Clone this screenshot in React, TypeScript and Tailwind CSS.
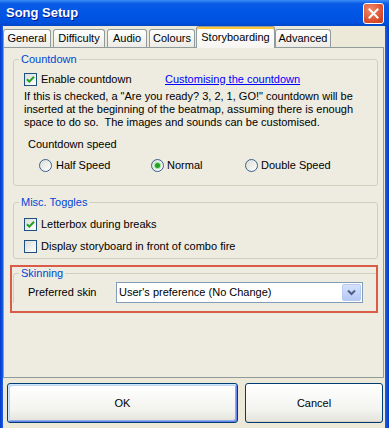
import React from "react";

function Check({ checked }: { checked?: boolean }) {
  return (
    <span className="w-[13px] h-[13px] border border-[#1C5180] bg-[linear-gradient(135deg,#DCDCD7,#FFFFFF)] flex items-center justify-center shrink-0">
      {checked && (
        <svg width="11" height="11" viewBox="0 0 11 11">
          <path d="M2 5.2 L4.3 7.6 L9 2.8" stroke="#21A121" strokeWidth="2" fill="none" />
        </svg>
      )}
    </span>
  );
}

function Radio({ checked }: { checked?: boolean }) {
  return (
    <span className="w-[13px] h-[13px] rounded-full border border-[#3A5F8A] bg-[linear-gradient(135deg,#DCDCD7,#FFFFFF)] flex items-center justify-center shrink-0">
      {checked && <span className="w-[5px] h-[5px] rounded-full bg-[#21A121] shadow-[0_0_0_1px_#A6E0A6]" />}
    </span>
  );
}

function Tab({ label, w, selected }: { label: string; w: string; selected?: boolean }) {
  if (selected) {
    return (
      <div
        className={`${w} h-[22px] -mb-px relative z-10 border border-b-0 border-[#919B9C] rounded-t-[3px] bg-[linear-gradient(180deg,#FFFFFF,#F6F5F1)] flex items-start justify-center pt-[3px] shadow-[inset_0_2px_0_#FFC83C]`}
      >
        <span className="leading-[13px] pt-[1px]">{label}</span>
      </div>
    );
  }
  return (
    <div
      className={`${w} h-[18px] border border-b-0 border-[#919B9C] rounded-t-[3px] bg-[linear-gradient(180deg,#FFFFFF,#ECEBE6)] flex items-center justify-center`}
    >
      <span className="leading-[13px]">{label}</span>
    </div>
  );
}

export default function App() {
  return (
    <div className="w-[389px] h-[428px] overflow-hidden flex flex-col bg-[#ECE9D8] text-[11px] text-black font-['Liberation_Sans',Arial,sans-serif]">
      {/* Title bar */}
      <div className="h-[26px] shrink-0 flex items-center justify-between pl-[6px] pr-[5px] bg-[linear-gradient(180deg,#3C8CF7_0%,#0A5CE6_14%,#0055E5_50%,#0052E0_85%,#0046C8_100%)]">
        <span className="text-white font-bold text-[13px] leading-[16px] [text-shadow:1px_1px_0_#0A1A8A]">Song Setup</span>
        <div className="w-[21px] h-[21px] mt-[1px] rounded-[3px] border border-white bg-[radial-gradient(circle_at_35%_30%,#F08A6A,#D8492A_70%,#C23A1E)] flex items-center justify-center">
          <svg width="11" height="11" viewBox="0 0 11 11">
            <path d="M1.5 1.5 L9.5 9.5 M9.5 1.5 L1.5 9.5" stroke="#FFFFFF" strokeWidth="2" strokeLinecap="square" />
          </svg>
        </div>
      </div>

      <div className="flex-1 flex">
        <div className="w-[3px] bg-[linear-gradient(90deg,#0738C8,#1660E8)]" />
        <div className="flex-1 flex flex-col">
          {/* Tabs */}
          <div className="h-[21px] flex items-end">
            <Tab label="General" w="w-[48px]" />
            <div className="w-[2px]" />
            <Tab label="Difficulty" w="w-[52px]" />
            <div className="w-[2px]" />
            <Tab label="Audio" w="w-[40px]" />
            <div className="w-[2px]" />
            <Tab label="Colours" w="w-[46px]" />
            <div className="w-[1px]" />
            <Tab label="Storyboarding" w="w-[79px]" selected />
            <Tab label="Advanced" w="w-[56px]" />
          </div>

          {/* Panel */}
          <div className="w-[381px] h-[331px] border border-[#919B9C] bg-[#EEEBE0] pt-[5px] flex flex-col">
            {/* Countdown */}
            <fieldset className="ml-[9px] w-[365px] border border-[#D0D0BF] rounded-[3px] pb-[13px]">
              <legend className="ml-[5px] px-[2px] leading-[13px] text-[#0046D5]">Countdown</legend>
              <div className="mt-[6px] h-[14px] flex items-center pl-[10px]">
                <div className="w-[141px] flex items-center">
                  <Check checked />
                  <span className="ml-[4px] leading-[13px]">Enable countdown</span>
                </div>
                <span className="leading-[13px] text-[#0000FF] underline underline-offset-[1px]">Customising the countdown</span>
              </div>
              <p className="mt-[4px] pl-[10px] leading-[13px]">
                If this is checked, a "Are you ready? 3, 2, 1, GO!" countdown will be
                <br />
                inserted at the beginning of the beatmap, assuming there is enough
                <br />
                space to do so.&nbsp; The images and sounds can be customised.
              </p>
              <div className="mt-[9px] pl-[14px] leading-[13px]">Countdown speed</div>
              <div className="mt-[7px] h-[14px] flex items-center pl-[25px]">
                <div className="w-[112px] flex items-center">
                  <Radio />
                  <span className="ml-[4px] leading-[13px]">Half Speed</span>
                </div>
                <div className="w-[94px] flex items-center">
                  <Radio checked />
                  <span className="ml-[3px] leading-[13px]">Normal</span>
                </div>
                <div className="flex items-center">
                  <Radio />
                  <span className="ml-[3px] leading-[13px]">Double Speed</span>
                </div>
              </div>
            </fieldset>

            {/* Misc */}
            <fieldset className="mt-[10px] ml-[9px] w-[365px] border border-[#D0D0BF] rounded-[3px] pb-[5px]">
              <legend className="ml-[5px] px-[2px] leading-[13px] text-[#0046D5]">Misc. Toggles</legend>
              <div className="mt-[8px] h-[14px] flex items-center pl-[10px]">
                <Check checked />
                <span className="ml-[4px] leading-[13px]">Letterbox during breaks</span>
              </div>
              <div className="mt-[8px] h-[14px] flex items-center pl-[10px]">
                <Check />
                <span className="ml-[4px] leading-[13px]">Display storyboard in front of combo fire</span>
              </div>
            </fieldset>

            {/* Skinning (highlighted) */}
            <div className="mt-[6px] ml-[6px] w-[368px] border-2 border-[#DA5B47] pb-[8px]">
              <fieldset className="ml-[1px] border border-r-0 border-b-0 border-[#D0D0BF] rounded-tl-[3px]">
                <legend className="ml-[5px] px-[2px] leading-[13px] text-[#0046D5]">Skinning</legend>
                <div className="mt-[2px] flex items-center pl-[14px]">
                  <span className="w-[88px] leading-[13px]">Preferred skin</span>
                  <div className="w-[247px] h-[21px] border border-[#7F9DB9] bg-white flex items-center justify-between pl-[2px] pr-[1px]">
                    <span className="leading-[13px]">User's preference (No Change)</span>
                    <div className="w-[19px] h-[17px] rounded-[2px] border border-[#B9CBF3] bg-[linear-gradient(180deg,#D6E2FD,#B4C8F6)] flex items-center justify-center">
                      <svg width="9" height="7" viewBox="0 0 9 7">
                        <path d="M1 1.5 L4.5 5 L8 1.5" stroke="#4D6185" strokeWidth="2" fill="none" />
                      </svg>
                    </div>
                  </div>
                </div>
              </fieldset>
            </div>
          </div>

          {/* Buttons */}
          <div className="mt-[5px] flex pl-[4px]">
            <button className="w-[231px] h-[40px] rounded-[3px] border border-[#003C74] bg-[linear-gradient(180deg,#FFFFFF,#F3F3EF_70%,#E3E2DA)] shadow-[inset_1px_1px_0_#CEE7FF,inset_-1px_-1px_0_#6982EE,inset_2px_2px_0_#BCD4F6,inset_-2px_-2px_0_#89ADE4] leading-[13px]">
              OK
            </button>
            <button className="ml-[7px] w-[138px] h-[40px] rounded-[3px] border border-[#003C74] bg-[linear-gradient(180deg,#FFFFFF,#F3F3EF_70%,#E3E2DA)] shadow-[inset_0_-1px_0_#D6D0C5] leading-[13px]">
              Cancel
            </button>
          </div>
        </div>
        <div className="w-[4px] bg-[linear-gradient(90deg,#1660E8,#0738C8)]" />
      </div>
    </div>
  );
}
